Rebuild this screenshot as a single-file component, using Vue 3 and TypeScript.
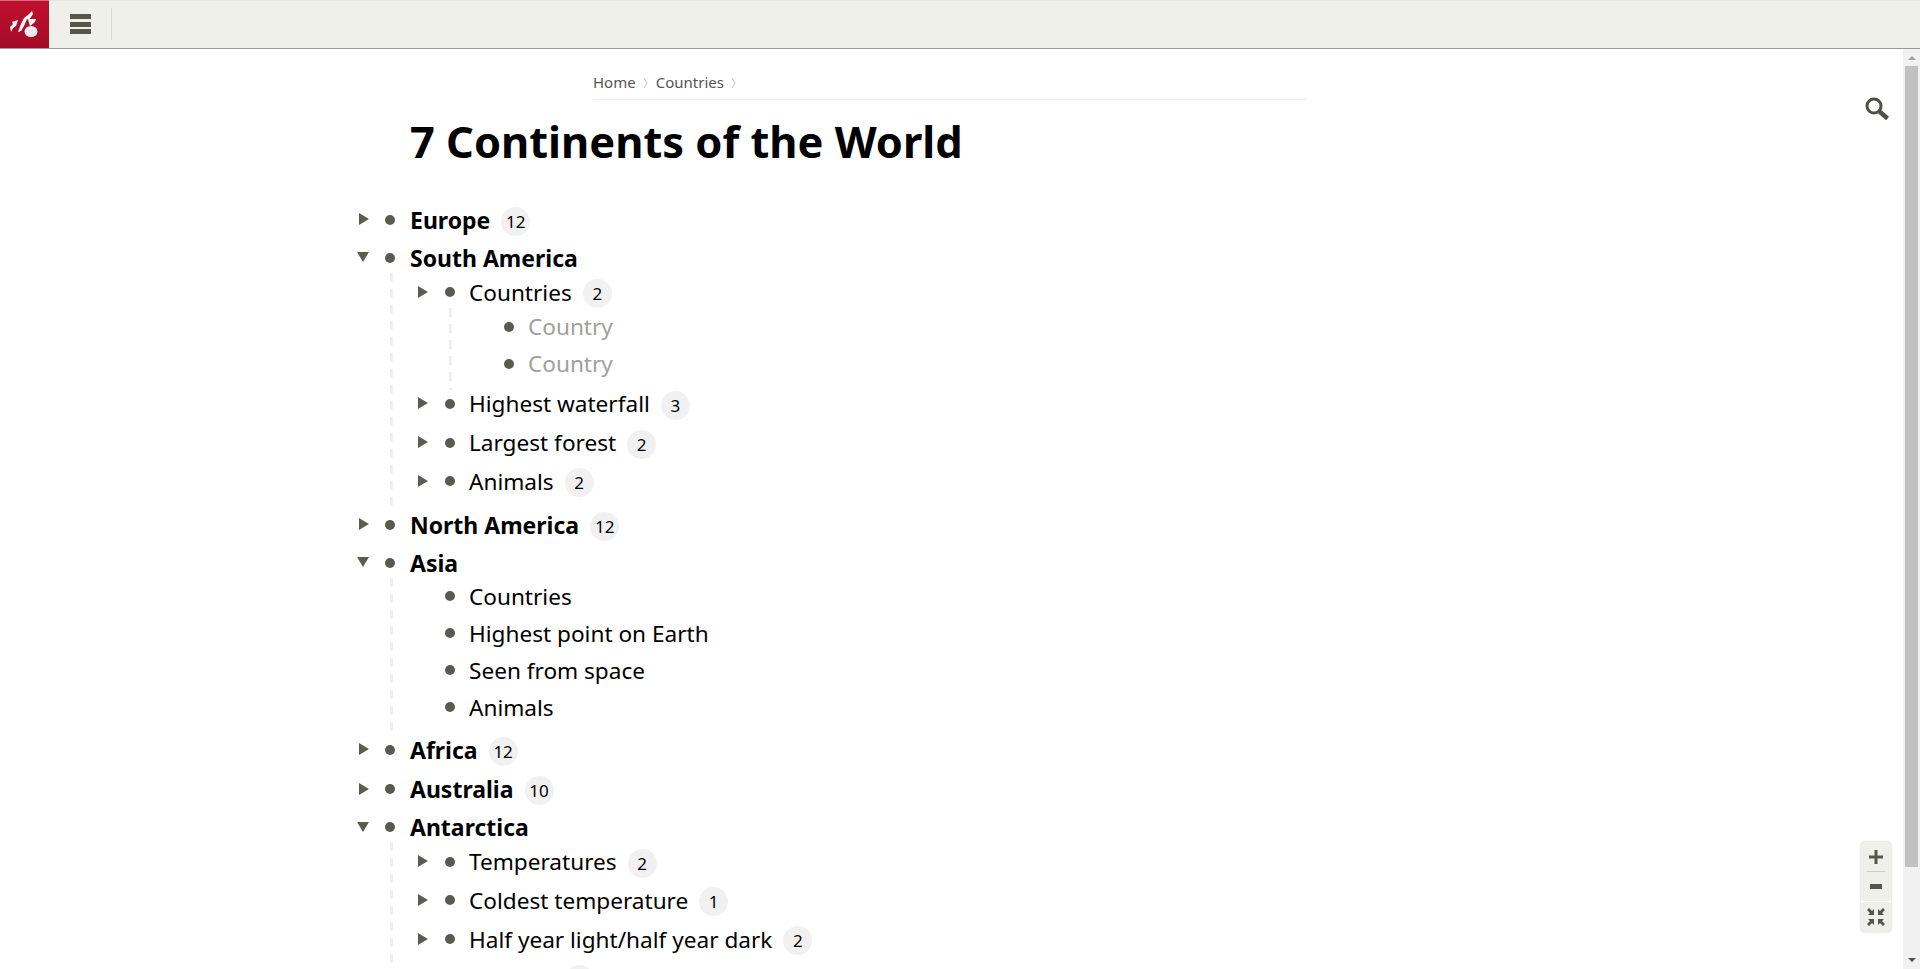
<script setup lang="ts">
interface Node { label: string; count?: number; grey?: boolean; arrow?: boolean; children?: Node[] }
const tree: Node[] = [
  { label: 'Europe', count: 12, arrow: true },
  { label: 'South America', arrow: true, children: [
    { label: 'Countries', count: 2, arrow: true, children: [
      { label: 'Country', grey: true }, { label: 'Country', grey: true } ] },
    { label: 'Highest waterfall', count: 3, arrow: true },
    { label: 'Largest forest', count: 2, arrow: true },
    { label: 'Animals', count: 2, arrow: true } ] },
  { label: 'North America', count: 12, arrow: true },
  { label: 'Asia', arrow: true, children: [
    { label: 'Countries' }, { label: 'Highest point on Earth' }, { label: 'Seen from space' }, { label: 'Animals' } ] },
  { label: 'Africa', count: 12, arrow: true },
  { label: 'Australia', count: 10, arrow: true },
  { label: 'Antarctica', arrow: true, children: [
    { label: 'Temperatures', count: 2, arrow: true },
    { label: 'Coldest temperature', count: 1, arrow: true },
    { label: 'Half year light/half year dark', count: 2, arrow: true },
    { label: 'Animals', count: 2, arrow: true } ] },
]
</script>

<template>
  <div class="app">
    <header class="bar">
      <div class="logo">
        <svg width="49" height="48" viewBox="0 0 49 48">
          <path d="M10 27l3-3-1-2 6-2-2 6-3 2-2 4z M18 32l3-8 3-6 4-3 4-4 1 3-4 6-2-1-3 7-3 5z M28 19l8 0-1 3-5 4-1-3z" fill="#fff" />
          <ellipse cx="31" cy="31.500" rx="6.500" ry="5.500" fill="#ececec" />
        </svg>
      </div>
      <div class="menu"><span></span><span></span><span></span></div>
      <div class="sep"></div>
    </header>
    <div class="body">
      <main class="page">
        <div class="head">
          <nav class="crumbs">
            <a>Home</a>
            <svg class="chev" width="5" height="12" viewBox="0 0 5 12"><path d="M1 1l3 5-3 5" fill="none" stroke="#c4c4c4" stroke-width="1" /></svg>
            <a>Countries</a>
            <svg class="chev" width="5" height="12" viewBox="0 0 5 12"><path d="M1 1l3 5-3 5" fill="none" stroke="#c4c4c4" stroke-width="1" /></svg>
          </nav>
          <h1>7 Continents of the World</h1>
        </div>
        <ul class="tree">
          <li v-for="(n, i) in tree" :key="i" class="item">
            <div class="row top" :class="{ tall: n.count }">
              <span class="tog" :class="{ open: n.children }"></span>
              <span class="dot"></span>
              <span class="label">{{ n.label }}</span>
              <span v-if="n.count" class="badge">{{ n.count }}</span>
            </div>
            <ul v-if="n.children" class="sub">
              <li v-for="(c, j) in n.children" :key="j" class="item">
                <div class="row mid" :class="{ tall: c.count }">
                  <span class="tog" :class="{ none: !c.arrow }"></span>
                  <span class="dot"></span>
                  <span class="label">{{ c.label }}</span>
                  <span v-if="c.count" class="badge">{{ c.count }}</span>
                </div>
                <ul v-if="c.children" class="sub inner">
                  <li v-for="(g, k) in c.children" :key="k" class="item">
                    <div class="row">
                      <span class="tog none"></span>
                      <span class="dot"></span>
                      <span class="label grey">{{ g.label }}</span>
                    </div>
                  </li>
                </ul>
              </li>
            </ul>
          </li>
        </ul>
      </main>
      <svg class="search" width="26" height="26" viewBox="0 0 26 26">
        <circle cx="10" cy="10" r="7" fill="none" stroke="#4f4f45" stroke-width="3" />
        <path d="M15.500 15.500l8 7" stroke="#4f4f45" stroke-width="4.500" fill="none" />
      </svg>
      <div class="zoom">
        <div class="zbtn">
          <svg width="14" height="14" viewBox="0 0 14 14"><path d="M5.500 0h3v5.500H14v3H8.500V14h-3V8.500H0v-3h5.500z" fill="#55554a" /></svg>
        </div>
        <div class="zline"></div>
        <div class="zbtn">
          <svg width="12" height="6" viewBox="0 0 12 6"><rect width="12" height="5" fill="#55554a" /></svg>
        </div>
        <div class="zsep"></div>
        <div class="zbtn">
          <svg width="18" height="18" viewBox="0 0 18 18" fill="#55554a">
            <path d="M0 2l2-2 3 3 2-2v6H1l2-2z M18 2l-2-2-3 3-2-2v6h6l-2-2z M0 16l2 2 3-3 2 2v-6H1l2 2z M18 16l-2 2-3-3-2 2v-6h6l-2 2z" />
          </svg>
        </div>
      </div>
      <div class="scrollbar">
        <span class="up"></span>
        <div class="thumb"></div>
        <span class="down"></span>
      </div>
    </div>
  </div>
</template>

<style>
html, body { margin: 0; height: 100%; overflow: hidden; background: #fff; }
</style>

<style scoped>
.app { height: 969px; display: flex; flex-direction: column; font-family: "Noto Sans", "Open Sans", sans-serif; color: #000; overflow: hidden; }
.bar { height: 48px; flex: none; display: flex; align-items: center; background: #f0f0eb; border-bottom: 1px solid #999; box-shadow: inset 0 1px 0 #e4e4e0; }
.logo { width: 49px; height: 48px; background: linear-gradient(#c0102f, #a30c28); box-shadow: inset 0 1px 0 #d0707f; }
.logo svg { display: block; }
.menu { margin-left: 21px; width: 21px; display: flex; flex-direction: column; gap: 2.500px; }
.menu span { height: 5px; background: #55554a; }
.sep { margin-left: 20px; width: 1px; height: 32px; background: #d8d8d3; }
.body { flex: 1; display: flex; position: relative; min-height: 0; }
.page { flex: 1; min-width: 0; padding-left: 351px; overflow: hidden; }
.head { padding-left: 59px; }
.crumbs { margin-left: 183px; width: 714px; height: 51px; box-sizing: border-box; padding-top: 15px; border-bottom: 1px solid #eee; font-size: 15px; line-height: 20px; color: #555; display: flex; align-items: center; }
.chev { margin: 2px 8px 0 7px; flex: none; }
h1 { margin: 12px 0 0; font-size: 43.400px; line-height: 60px; font-weight: 700; }
.tree, .sub { list-style: none; margin: 0; padding: 0; }
.tree { margin-top: 28px; }
.sub { margin: -3.500px 0 -3.500px 39px; padding: 0 0 8px 20px; background: repeating-linear-gradient(#eee 0 9px, transparent 9px 16px) left top / 3px 100% no-repeat; }
.sub.inner { margin-top: -3px; margin-bottom: -6px; padding-bottom: 8px; }
.row { height: 37px; display: flex; align-items: center; font-size: 22.600px; }
.row.tall { height: 39.300px; }
.mid:not(.tall) { height: 37px; }
.mid.tall { height: 38.700px; }
.top { font-weight: 700; font-size: 23px; }
.tog { width: 0; height: 0; border-style: solid; border-width: 6px 0 6px 10px; border-color: transparent transparent transparent #5c5c50; margin: 0 0 1px 8px; }
.tog.open { border-width: 10px 6px 0 6px; border-color: #5c5c50 transparent transparent; margin-left: 6px; }
.tog.none { border-color: transparent; }
.dot { width: 10px; height: 10px; border-radius: 50%; background: #5a5a50; margin: 0 0 0 17px; }
.label { margin-left: 14px; }
.top .dot { margin-left: 16px; }
.top .label { margin-left: 15px; }
.grey { color: #a0a09c; }
.badge { margin: 3px 0 0 11px; width: 29px; height: 29px; border-radius: 50%; background: #f1f1f1; font-size: 17px; font-weight: 400; line-height: 29px; text-align: center; flex: none; }
.search { position: absolute; right: 30px; top: 47px; }
.zoom { position: absolute; right: 29px; top: 793px; width: 30px; height: 90px; background: #f0f0eb; border-radius: 4px; box-shadow: 0 0 2px #bbb; display: flex; flex-direction: column; align-items: center; }
.zbtn { height: 29px; display: flex; align-items: center; justify-content: center; flex: none; }
.zline { width: 18px; height: 1px; background: #ccc; flex: none; }
.zsep { width: 100%; height: 1px; background: #fff; flex: none; }
.scrollbar { width: 17px; flex: none; background: #f1f1f1; display: flex; flex-direction: column; align-items: center; }
.thumb { width: 13px; flex: 1; background: #c1c1c1; margin: 0; }
.up, .down { flex: none; width: 0; border-left: 4px solid transparent; border-right: 4px solid transparent; box-sizing: content-box; }
.up { height: 0; border-bottom: 4px solid #a0a0a0; margin: 7px 0 6px; }
.down { height: 0; border-top: 4px solid #505050; margin: 91px 0 7px; }
</style>
